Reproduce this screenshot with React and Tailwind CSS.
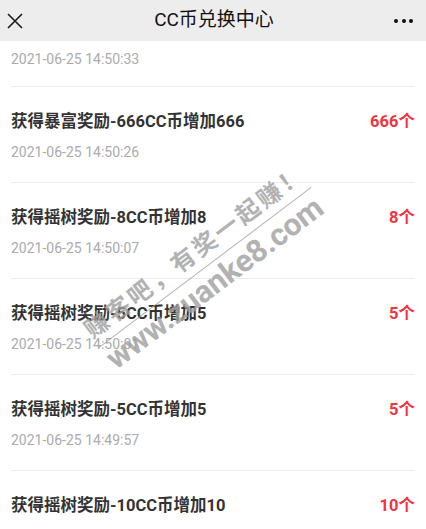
const ROWS = [
  { title: '获得暴富奖励-666CC币增加666', amount: '666个', time: '2021-06-25 14:50:26' },
  { title: '获得摇树奖励-8CC币增加8', amount: '8个', time: '2021-06-25 14:50:07' },
  { title: '获得摇树奖励-5CC币增加5', amount: '5个', time: '2021-06-25 14:50:01' },
  { title: '获得摇树奖励-5CC币增加5', amount: '5个', time: '2021-06-25 14:49:57' },
  { title: '获得摇树奖励-10CC币增加10', amount: '10个', time: '' },
];

const FONT = { fontFamily: 'Roboto, "Noto Sans CJK SC", sans-serif' };

function Record({ item }) {
  return (
    <div className="mx-[11px] border-t border-[#ececec] pt-[23px] pb-[21px]">
      <div className="flex items-center justify-between h-6">
        <span className="text-[16.5px] font-bold text-[#333]">{item.title}</span>
        <span className="text-[16.5px] font-bold text-[#f2343e]">{item.amount}</span>
      </div>
      <div className="mt-[9px] h-[18px] leading-[18px] text-[14px] text-[#ababab]">{item.time}</div>
    </div>
  );
}

export default function App() {
  return (
    <div className="relative w-[426px] h-[529px] overflow-hidden bg-white" style={FONT}>
      {/* top bar */}
      <div className="h-[41px] bg-[#ededed] grid grid-cols-[1fr_auto_1fr] items-center pl-[7px] pr-[13px]">
        <svg width="16" height="16" viewBox="0 0 16 16" className="text-[#1a1a1a]">
          <path d="M1 1 L15 15 M15 1 L1 15" stroke="currentColor" strokeWidth="1.6" fill="none" />
        </svg>
        <span className="text-[19px] text-[#111] pl-[8px]">CC币兑换中心</span>
        <div className="flex items-center justify-end gap-[3.5px]">
          <span className="w-[4px] h-[4px] rounded-full bg-[#111]" />
          <span className="w-[4px] h-[4px] rounded-full bg-[#111]" />
          <span className="w-[4px] h-[4px] rounded-full bg-[#111]" />
        </div>
      </div>

      <div className="mx-[11px] pt-[9px] pb-[18px] h-[45px]">
        <div className="h-[18px] leading-[18px] text-[14px] text-[#ababab]">2021-06-25 14:50:33</div>
      </div>

      {ROWS.map((r, i) => (
        <Record key={i} item={r} />
      ))}

      {/* watermark */}
      <div className="absolute left-[72px] top-[233px] w-[266px] -rotate-[37deg] text-[#a0a0a0] opacity-80 font-bold pointer-events-none">
        <div className="h-[32px] leading-[32px] text-[24px] tracking-[3px] whitespace-nowrap">赚客吧，有奖一起赚！</div>
        <div className="h-px bg-[#a0a0a0] my-[2px]" />
        <div className="h-[32px] leading-[32px] text-[31px] whitespace-nowrap">www.zuanke8.com</div>
      </div>
    </div>
  );
}
